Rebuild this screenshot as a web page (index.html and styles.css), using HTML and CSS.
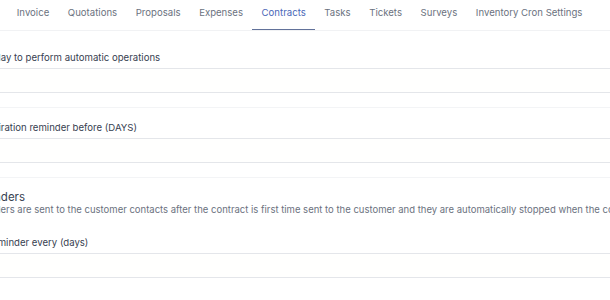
FILE: index.html
```html
<!DOCTYPE html>
<html lang="en">
  <head>
    <meta charset="UTF-8" />
    <meta name="viewport" content="width=device-width, initial-scale=1.0" />
    <title>Settings - Cron Job</title>
    <link rel="stylesheet" href="styles.css">
  </head>
  <body>
    <nav class="tabs">
      <a href="#">Invoice</a>
      <a href="#">Quotations</a>
      <a href="#">Proposals</a>
      <a href="#">Expenses</a>
      <a href="#" class="active">Contracts</a>
      <a href="#">Tasks</a>
      <a href="#">Tickets</a>
      <a href="#">Surveys</a>
      <a href="#">Inventory Cron Settings</a>
    </nav>

    <main class="panel">
      <div class="field">
        <label>Hour of day to perform automatic operations</label>
        <input type="text" value="" />
      </div>
      <hr />
      <div class="field expiry">
        <label>Send expiration reminder before (DAYS)</label>
        <input type="text" value="" />
      </div>
      <hr />
      <h4 class="section">Sign Reminders</h4>
      <p class="hint">Sign reminders are sent to the customer contacts after the contract is first time sent to the customer and they are automatically stopped when the contract is signed.</p>
      <div class="field sign-every">
        <label>Send sign reminder every (days)</label>
        <input type="text" value="" />
      </div>
    </main>
  </body>
</html>
```

FILE: styles.css
```css
body {
  margin: 0;
  overflow: hidden;
  background: #fff;
  font-family: Inter, "Noto Sans", sans-serif;
  font-size: 9.6px;
  color: #374151;
}

.tabs {
  display: flex;
  padding-left: 7.5px;
  border-bottom: 1px solid #f1f2f4;
  height: 30px;
}

.tabs a {
  display: block;
  padding: 6px 9.3px 0;
  line-height: 14px;
  color: #6b7280;
  text-decoration: none;
  white-space: nowrap;
}

.tabs a.active {
  color: #4a67b8;
  border-bottom: 1px solid #62729a;
}

.panel {
  margin-left: -42px;
  margin-right: -20px;
  padding-top: 20px;
}

.field label {
  display: block;
  line-height: 14px;
  margin-bottom: 3px;
  color: #374151;
  white-space: nowrap;
}

.field input {
  display: block;
  width: 100%;
  box-sizing: border-box;
  height: 25px;
  border: 1px solid #e4e6ea;
  background: #fffffe;
  font: inherit;
}

.expiry label {
  text-indent: -2px;
}

.sign-every label {
  text-indent: -17px;
}

hr {
  border: 0;
  border-top: 1px solid #f3f4f6;
  margin: 14px 0 13px;
}

.section {
  margin: 0;
  font-size: 11.5px;
  font-weight: 400;
  line-height: 13px;
  color: #374151;
  text-indent: -18px;
  white-space: nowrap;
}

.hint {
  margin: 0 0 21px;
  font-size: 9.5px;
  line-height: 11px;
  color: #6b7280;
  text-indent: -11px;
  white-space: nowrap;
}
```
